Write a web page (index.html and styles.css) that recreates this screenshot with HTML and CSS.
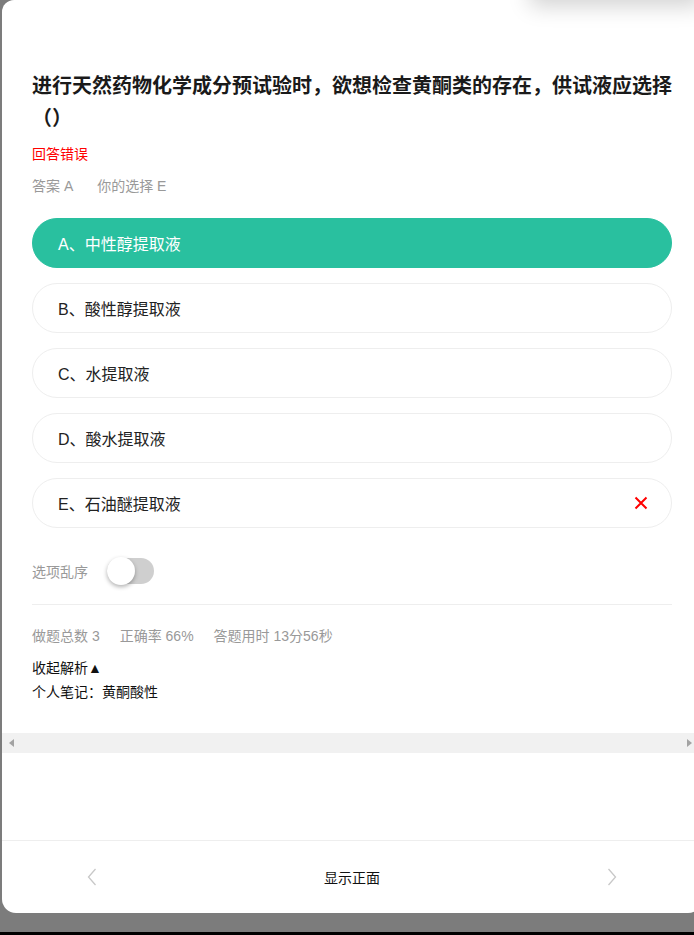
FILE: index.html
```html
<!DOCTYPE html>
<html lang="zh">
<head>
<meta charset="utf-8">
<link rel="stylesheet" href="styles.css">
</head>
<body>
<div class="screen">
  <div class="card">
    <div class="shadow-pop"></div>
    <div class="content">
      <h1 class="title">进行天然药物化学成分预试验时，欲想检查黄酮类的存在，供试液应选择（）</h1>
      <div class="result">回答错误</div>
      <div class="answers"><span>答案 A</span><span>你的选择 E</span></div>
      <div class="options">
        <div class="opt opt-right">A、中性醇提取液</div>
        <div class="opt">B、酸性醇提取液</div>
        <div class="opt">C、水提取液</div>
        <div class="opt">D、酸水提取液</div>
        <div class="opt">E、石油醚提取液
          <svg class="cross" width="14" height="14" viewBox="0 0 14 14"><path d="M1.5 1.5L12.5 12.5M12.5 1.5L1.5 12.5" stroke="#f00" stroke-width="2" fill="none"/></svg>
        </div>
      </div>
      <div class="shuffle">
        <span>选项乱序</span>
        <div class="switch"><div class="knob"></div></div>
      </div>
      <div class="stats"><span>做题总数 3</span><span>正确率 66%</span><span>答题用时 13分56秒</span></div>
      <div class="toggle-analysis">收起解析▲</div>
      <div class="note">个人笔记：黄酮酸性</div>
    </div>
    <div class="hscroll">
      <span class="tri tri-left"></span>
      <span class="tri tri-right"></span>
    </div>
    <div class="spacer"></div>
    <div class="footer">
      <svg class="chev" width="10" height="18" viewBox="0 0 10 18"><path d="M8.5 1L1.5 9L8.5 17" stroke="#c8c8c8" stroke-width="1.3" fill="none"/></svg>
      <span class="flip">显示正面</span>
      <svg class="chev" width="10" height="18" viewBox="0 0 10 18"><path d="M1.5 1L8.5 9L1.5 17" stroke="#c8c8c8" stroke-width="1.3" fill="none"/></svg>
    </div>
  </div>
  <div class="gap"></div>
  <div class="bottom-bar"></div>
</div>
</body>
</html>
```
FILE: styles.css
```css
* { box-sizing: border-box; }
html, body { margin: 0; padding: 0; }
body {
  background: #7c7c7c;
  font-family: "Liberation Sans", "Noto Sans CJK SC", sans-serif;
  overflow: hidden;
}
.screen {
  height: 935px;
  display: flex;
  flex-direction: column;
}
.card {
  position: relative;
  margin-left: 2px;
  width: 700px;
  height: 913px;
  background: #fff;
  border-radius: 12px 0 14px 14px;
  display: flex;
  flex-direction: column;
}
.shadow-pop {
  position: absolute;
  top: -40px;
  right: 6px;
  width: 160px;
  height: 40px;
  background: #fff;
  box-shadow: 0 0 22px 6px rgba(0,0,0,0.18);
}
.content {
  padding: 69px 0 0 30px;
  width: 670px;
}
.title {
  margin: 0;
  font-family: "Noto Sans CJK SC", sans-serif;
  font-size: 20px;
  font-weight: 700;
  line-height: 32px;
  color: #1a1a1a;
  width: 640px;
}
.result {
  margin-top: 12px;
  color: #f00;
  font-size: 14px;
  line-height: 18px;
}
.answers {
  margin-top: 14px;
  color: #999;
  font-size: 14px;
  line-height: 18px;
  display: flex;
  gap: 24px;
}
.options {
  margin-top: 23px;
  display: flex;
  flex-direction: column;
  gap: 15px;
}
.opt {
  height: 50px;
  border: 1px solid #eee;
  border-radius: 25px;
  display: flex;
  align-items: center;
  padding-left: 25px;
  padding-right: 23px;
  font-size: 16px;
  color: #222;
}
.opt-right {
  background: #29c09f;
  border-color: #29c09f;
  color: #fff;
}
.cross { margin-left: auto; }
.shuffle {
  margin-top: 29px;
  display: flex;
  align-items: center;
  gap: 19px;
  font-size: 14px;
  color: #999;
  height: 28px;
}
.switch {
  position: relative;
  width: 47px;
  height: 26px;
  border-radius: 13px;
  background: #cfcfcf;
}
.knob {
  position: absolute;
  left: 0;
  top: -1px;
  width: 28px;
  height: 28px;
  border-radius: 50%;
  background: #fff;
  box-shadow: 0 2px 4px rgba(0,0,0,0.3);
}
.stats {
  margin-top: 19px;
  border-top: 1px solid #eee;
  padding-top: 22px;
  display: flex;
  gap: 20px;
  font-size: 14px;
  line-height: 18px;
  color: #999;
}
.toggle-analysis {
  margin-top: 14px;
  font-size: 14px;
  line-height: 18px;
  color: #111;
}
.note {
  margin-top: 6px;
  font-size: 14px;
  line-height: 18px;
  color: #111;
}
.hscroll {
  margin-top: 32px;
  height: 20px;
  width: 692px;
  background: #f1f1f1;
  display: flex;
  align-items: center;
  justify-content: space-between;
  padding: 0 2px 0 7px;
}
.tri {
  width: 0;
  height: 0;
  border-top: 4px solid transparent;
  border-bottom: 4px solid transparent;
}
.tri-left { border-right: 5px solid #a3a3a3; }
.tri-right { border-left: 5px solid #a3a3a3; }
.spacer {
  flex: 1;
  border-bottom: 1px solid #eee;
}
.footer {
  height: 72px;
  width: 692px;
  display: flex;
  align-items: center;
  justify-content: space-between;
  padding: 0 77px 0 85px;
}
.flip {
  font-size: 14px;
  color: #111;
}
.chev { display: block; }
.gap { flex: 1; }
.bottom-bar {
  height: 3px;
  background: #000;
}
```
